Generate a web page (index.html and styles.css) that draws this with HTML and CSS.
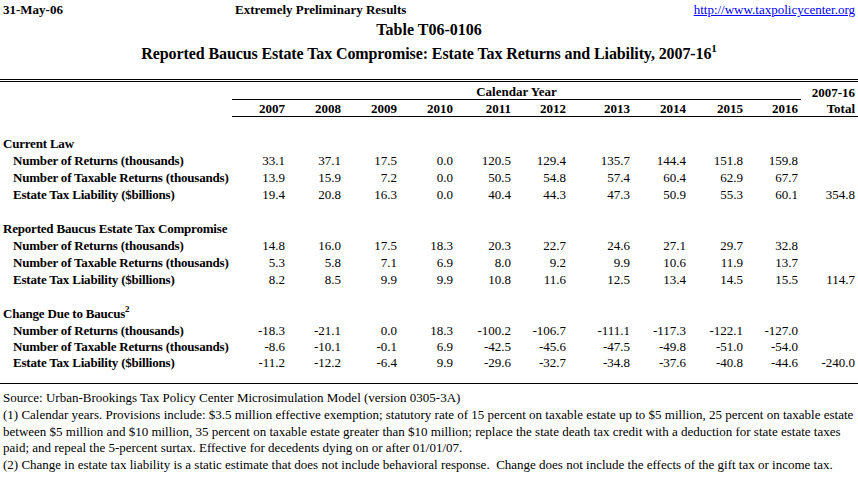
FILE: index.html
```html
<!DOCTYPE html>
<html>
<head>
<meta charset="utf-8">
<title>Table T06-0106</title>
<link rel="stylesheet" href="styles.css">
</head>
<body>
<table class="sheet">
  <colgroup>
    <col class="w-label">
    <col class="w56"><col class="w56"><col class="w56"><col class="w56">
    <col class="w58"><col class="w55"><col class="w64"><col class="w56">
    <col class="w57"><col class="w55"><col class="w57">
  </colgroup>
  <tr class="r-top">
    <td class="bold">31-May-06</td>
    <td colspan="6" class="bold">Extremely Preliminary Results</td>
    <td colspan="5" class="right"><a class="link" href="#">http://www.taxpolicycenter.org</a></td>
  </tr>
  <tr class="r-table">
    <td colspan="12" class="big center">Table T06-0106</td>
  </tr>
  <tr class="r-title">
    <td colspan="12" class="big center title">Reported Baucus Estate Tax Compromise: Estate Tax Returns and Liability, 2007-16<sup class="sup-big">1</sup></td>
  </tr>
  <tr class="r-gap"><td colspan="12" class="double"></td></tr>
  <tr class="r-cal">
    <td></td>
    <td colspan="10" class="bold center rule">Calendar Year</td>
    <td class="bold right">2007-16</td>
  </tr>
  <tr class="r-years">
    <td></td>
    <td class="bold right rule">2007</td>
    <td class="bold right rule">2008</td>
    <td class="bold right rule">2009</td>
    <td class="bold right rule">2010</td>
    <td class="bold right rule">2011</td>
    <td class="bold right rule">2012</td>
    <td class="bold right rule">2013</td>
    <td class="bold right rule">2014</td>
    <td class="bold right rule">2015</td>
    <td class="bold right rule">2016</td>
    <td class="bold right rule">Total</td>
  </tr>
  <tr class="r-blank"><td colspan="12"></td></tr>

  <tr class="r-data"><td class="label" colspan="12">Current Law</td></tr>
  <tr class="r-data">
    <td class="label indent">Number of Returns (thousands)</td>
    <td class="num">33.1</td><td class="num">37.1</td><td class="num">17.5</td><td class="num">0.0</td><td class="num">120.5</td><td class="num">129.4</td><td class="num">135.7</td><td class="num">144.4</td><td class="num">151.8</td><td class="num">159.8</td><td class="num"></td>
  </tr>
  <tr class="r-data">
    <td class="label indent">Number of Taxable Returns (thousands)</td>
    <td class="num">13.9</td><td class="num">15.9</td><td class="num">7.2</td><td class="num">0.0</td><td class="num">50.5</td><td class="num">54.8</td><td class="num">57.4</td><td class="num">60.4</td><td class="num">62.9</td><td class="num">67.7</td><td class="num"></td>
  </tr>
  <tr class="r-data">
    <td class="label indent">Estate Tax Liability ($billions)</td>
    <td class="num">19.4</td><td class="num">20.8</td><td class="num">16.3</td><td class="num">0.0</td><td class="num">40.4</td><td class="num">44.3</td><td class="num">47.3</td><td class="num">50.9</td><td class="num">55.3</td><td class="num">60.1</td><td class="num">354.8</td>
  </tr>
  <tr class="r-data"><td colspan="12"></td></tr>

  <tr class="r-data"><td class="label" colspan="12">Reported Baucus Estate Tax Compromise</td></tr>
  <tr class="r-data">
    <td class="label indent">Number of Returns (thousands)</td>
    <td class="num">14.8</td><td class="num">16.0</td><td class="num">17.5</td><td class="num">18.3</td><td class="num">20.3</td><td class="num">22.7</td><td class="num">24.6</td><td class="num">27.1</td><td class="num">29.7</td><td class="num">32.8</td><td class="num"></td>
  </tr>
  <tr class="r-data">
    <td class="label indent">Number of Taxable Returns (thousands)</td>
    <td class="num">5.3</td><td class="num">5.8</td><td class="num">7.1</td><td class="num">6.9</td><td class="num">8.0</td><td class="num">9.2</td><td class="num">9.9</td><td class="num">10.6</td><td class="num">11.9</td><td class="num">13.7</td><td class="num"></td>
  </tr>
  <tr class="r-data">
    <td class="label indent">Estate Tax Liability ($billions)</td>
    <td class="num">8.2</td><td class="num">8.5</td><td class="num">9.9</td><td class="num">9.9</td><td class="num">10.8</td><td class="num">11.6</td><td class="num">12.5</td><td class="num">13.4</td><td class="num">14.5</td><td class="num">15.5</td><td class="num">114.7</td>
  </tr>
  <tr class="r-data"><td colspan="12"></td></tr>

  <tr class="r-data"><td class="label" colspan="12">Change Due to Baucus<sup class="sup-small">2</sup></td></tr>
  <tr class="r-data">
    <td class="label indent">Number of Returns (thousands)</td>
    <td class="num">-18.3</td><td class="num">-21.1</td><td class="num">0.0</td><td class="num">18.3</td><td class="num">-100.2</td><td class="num">-106.7</td><td class="num">-111.1</td><td class="num">-117.3</td><td class="num">-122.1</td><td class="num">-127.0</td><td class="num"></td>
  </tr>
  <tr class="r-data r-snug">
    <td class="label indent">Number of Taxable Returns (thousands)</td>
    <td class="num">-8.6</td><td class="num">-10.1</td><td class="num">-0.1</td><td class="num">6.9</td><td class="num">-42.5</td><td class="num">-45.6</td><td class="num">-47.5</td><td class="num">-49.8</td><td class="num">-51.0</td><td class="num">-54.0</td><td class="num"></td>
  </tr>
  <tr class="r-data r-snug">
    <td class="label indent">Estate Tax Liability ($billions)</td>
    <td class="num">-11.2</td><td class="num">-12.2</td><td class="num">-6.4</td><td class="num">9.9</td><td class="num">-29.6</td><td class="num">-32.7</td><td class="num">-34.8</td><td class="num">-37.6</td><td class="num">-40.8</td><td class="num">-44.6</td><td class="num">-240.0</td>
  </tr>
</table>
<div class="notes">
  <p class="note">Source: Urban-Brookings Tax Policy Center Microsimulation Model (version 0305-3A)</p>
  <p class="note">(1) Calendar years. Provisions include: $3.5 million effective exemption; statutory rate of 15 percent on taxable estate up to $5 million, 25 percent on taxable estate<br>between $5 million and $10 million, 35 percent on taxable estate greater than $10 million; replace the state death tax credit with a deduction for state estate taxes<br>paid; and repeal the 5-percent surtax. Effective for decedents dying on or after 01/01/07.</p>
  <p class="note">(2) Change in estate tax liability is a static estimate that does not include behavioral response.&nbsp; Change does not include the effects of the gift tax or income tax.</p>
</div>
</body>
</html>
```

FILE: styles.css
```css
html, body {
  margin: 0;
  padding: 0;
  background: #ffffff;
}

body {
  font-family: "Liberation Serif", "Times New Roman", serif;
  font-size: 13px;
  color: #000000;
}

.sheet {
  border-collapse: collapse;
  table-layout: fixed;
  width: 858px;
}

.w-label { width: 232px; }
.w55 { width: 55px; }
.w56 { width: 56px; }
.w57 { width: 57px; }
.w58 { width: 58px; }
.w64 { width: 64px; }

.sheet td {
  padding: 0 3px 0 3px;
  vertical-align: bottom;
  line-height: 15px;
  white-space: nowrap;
}

.bold { font-weight: bold; }
.label {
  font-weight: bold;
  letter-spacing: -0.2px;
}
.right { text-align: right; }
.center { text-align: center; }
.indent { padding-left: 13px !important; }

.num {
  text-align: right;
}

.big {
  font-size: 16px;
  font-weight: bold;
  line-height: 18px !important;
}

.title {
  letter-spacing: -0.1px;
}

.sup-big {
  font-size: 11px;
  line-height: 0;
  vertical-align: 7px;
}

.sup-small {
  font-size: 9px;
  line-height: 0;
  vertical-align: 6px;
}

.link {
  color: #0000ff;
  text-decoration: underline;
}

.r-top td { height: 17px; }
.r-table td { height: 22px; }
.r-title td { height: 24px; }
.r-gap td { height: 16px; }
.double { border-bottom: 3px double #000000; }
.r-cal td { height: 17px; }
.r-years td { height: 16px; }
.rule { border-bottom: 1px solid #000000; }
.r-blank td { height: 17px; }
.r-data td { height: 17px; }
.r-data.r-snug td { height: 16px; }

.notes {
  width: 858px;
  margin-top: 13px;
  border-top: 1px solid #000000;
  padding: 6px 0 0 0;
}

.note {
  margin: 0;
  padding: 0 0 0 3px;
  line-height: 16.75px;
  white-space: nowrap;
}
```
